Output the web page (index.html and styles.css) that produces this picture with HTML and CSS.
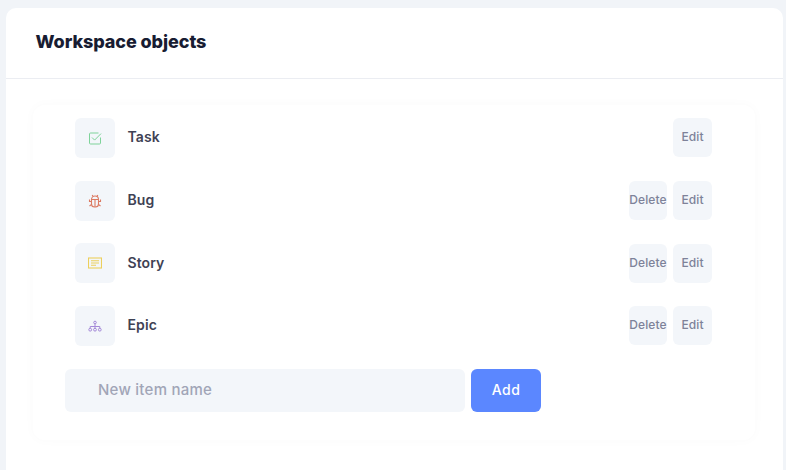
FILE: index.html
```html
<!DOCTYPE html>
<html lang="en">
<head>
<meta charset="utf-8">
<title>Workspace objects</title>
<link rel="stylesheet" href="styles.css">
</head>
<body>
<main class="card">
  <header class="card-head"><h1 class="title">Workspace objects</h1></header>
  <section class="card-body">
    <div class="panel">
      <ul class="list">
        <li class="row">
          <span class="tile"><svg class="icon" viewBox="0 0 14 14" fill="none" stroke="#7fd39a" stroke-width="1"><path d="M12.500 6.500V12a1 1 0 0 1-1 1H2.500a1 1 0 0 1-1-1V3a1 1 0 0 1 1-1h8"/><path d="M4 6.500l2.600 2.600L13 2.600"/></svg></span>
          <span class="name">Task</span>
          <span class="actions"><button class="btn">Edit</button></span>
        </li>
        <li class="row">
          <span class="tile"><svg class="icon" viewBox="0 0 14 14" fill="none" stroke="#dc7a62" stroke-width="1.100"><path d="M3.500 5.500a3.500 3.500 0 0 1 7 0V10a3 3 0 0 1-3 3h-1a3 3 0 0 1-3-3z"/><path d="M3.500 5.500h7M7 5.500V13M5 2.600L4.200 1M9 2.600L9.800 1M3.500 7.500H1.500V5.500M10.500 7.500h2V5.500M3.500 10.500l-2 1.500M10.500 10.500l2 1.500"/></svg></span>
          <span class="name">Bug</span>
          <span class="actions"><button class="btn btn-del">Delete</button><button class="btn">Edit</button></span>
        </li>
        <li class="row">
          <span class="tile"><svg class="icon" viewBox="0 0 14 14" fill="none" stroke="#eccf5c" stroke-width="1.100"><rect x="0.500" y="2" width="13" height="10"/><path d="M3 4.800h8M3 7h8M3 9.200h5"/></svg></span>
          <span class="name">Story</span>
          <span class="actions"><button class="btn btn-del">Delete</button><button class="btn">Edit</button></span>
        </li>
        <li class="row">
          <span class="tile"><svg class="icon" viewBox="0 0 14 14" fill="none" stroke="#a58ad8" stroke-width="1"><circle cx="7" cy="3.500" r="1.300"/><circle cx="2.200" cy="10.700" r="1.400"/><circle cx="7" cy="10.700" r="1.400"/><circle cx="11.800" cy="10.700" r="1.400"/><path d="M7 4.800v4.500M2.200 9.300V7.500h9.600v1.800"/></svg></span>
          <span class="name">Epic</span>
          <span class="actions"><button class="btn btn-del">Delete</button><button class="btn">Edit</button></span>
        </li>
      </ul>
      <form class="add-form">
        <input class="field" type="text" placeholder="New item name">
        <button class="add" type="button">Add</button>
      </form>
    </div>
  </section>
</main>
</body>
</html>
```
FILE: styles.css
```css
* { box-sizing: border-box; }
html, body { height: 100%; }
body {
  margin: 0;
  padding: 8px 3px 0 6px;
  background: #f1f4f8;
  font-family: Inter, "Open Sans", sans-serif;
  overflow: hidden;
}
.card {
  height: 100%;
  background: #fff;
  border-radius: 10px 10px 0 0;
}
.card-head {
  height: 71px;
  padding: 0 29.500px 3px;
  display: flex;
  align-items: center;
  border-bottom: 1px solid #ebedf2;
}
.title {
  margin: 0;
  font-size: 18px;
  font-weight: 800;
  letter-spacing: -0.080px;
  color: #181c32;
}
.card-body { padding: 26px 28px 0 27px; }
.panel {
  height: 335px;
  padding: 13px 43px 0 32px;
  border-radius: 12px;
  box-shadow: 0 0 12px rgba(56, 65, 74, 0.022);
}
.list {
  list-style: none;
  margin: 0;
  padding: 0 0 0 10px;
  display: flex;
  flex-direction: column;
  gap: 22.700px;
}
.row {
  height: 40px;
  display: flex;
  align-items: center;
}
.tile {
  width: 40px;
  height: 40px;
  border-radius: 6px;
  background: #f3f6fa;
  display: flex;
  align-items: center;
  justify-content: center;
}
.icon { width: 14px; height: 14px; display: block; }
.name {
  margin-left: 12.500px;
  padding-bottom: 2.400px;
  font-size: 14px;
  font-weight: 600;
  letter-spacing: 0.100px;
  color: #3f4254;
}
.actions {
  margin-left: auto;
  margin-top: 0.400px;
  align-self: flex-start;
  display: flex;
  gap: 6px;
}
.btn {
  width: 39px;
  height: 39px;
  padding: 0 0 2px;
  border: 0;
  border-radius: 6px;
  background: #f3f6fa;
  font: 500 12px Inter, sans-serif;
  letter-spacing: 0.100px;
  color: #7e8299;
  white-space: nowrap;
}
.btn-del { width: 38px; display: flex; align-items: center; justify-content: center; }
.add-form {
  margin-top: 23px;
  display: flex;
  gap: 6px;
}
.field {
  width: 400px;
  height: 43px;
  padding: 0 33px 2px;
  border: 0;
  border-radius: 6px;
  background: #f3f6fa;
  font: 500 15px Inter, sans-serif;
  letter-spacing: 0.250px;
  color: #3f4254;
}
.field::placeholder { color: #a1a5b7; opacity: 1; }
.add {
  width: 70px;
  height: 43px;
  padding: 0 0 2px;
  border: 0;
  border-radius: 6px;
  background: #5b87ff;
  font: 500 14px Inter, sans-serif;
  letter-spacing: 0.500px;
  color: #fff;
}
```
